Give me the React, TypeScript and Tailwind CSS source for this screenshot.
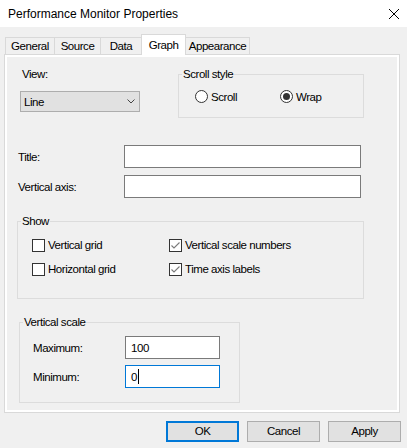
import React from 'react'

function GroupBox({ title, className, children }: { title: string; className: string; children: React.ReactNode }) {
  return (
    <fieldset className={`border border-[#dcdcdc] ${className}`}>
      <legend className="ml-[3px] px-[1px] leading-[16px]">{title}</legend>
      {children}
    </fieldset>
  )
}

function Radio({ checked, label, className = '' }: { checked?: boolean; label: string; className?: string }) {
  return (
    <div className={`flex items-center h-[13px] ${className}`}>
      <span className="w-[13px] h-[13px] rounded-full border border-[#333333] bg-white flex items-center justify-center">
        {checked && <span className="w-[7px] h-[7px] rounded-full bg-[#333333]" />}
      </span>
      <span className="ml-[3px] leading-[16px]">{label}</span>
    </div>
  )
}

function Check({ checked, label, className = '' }: { checked?: boolean; label: string; className?: string }) {
  return (
    <div className={`flex items-center h-[16px] ${className}`}>
      <span className="w-[13px] h-[13px] border border-[#333333] bg-white flex items-center justify-center">
        {checked && (
          <svg width="11" height="11" viewBox="0 0 11 11">
            <path d="M1.5 5.5 L4 8 L9.5 2.5" fill="none" stroke="#7a7a7a" strokeWidth="1.1" />
          </svg>
        )}
      </span>
      <span className="ml-[3px]">{label}</span>
    </div>
  )
}

function TextBox({ value, width, focused, caret }: { value?: string; width: string; focused?: boolean; caret?: boolean }) {
  return (
    <div className={`${width} h-[23px] bg-white border ${focused ? 'border-[#0078d7]' : 'border-[#7a7a7a]'} flex items-center pl-[5px]`}>
      <span>{value}</span>
      {caret && <span className="w-px h-[15px] bg-black ml-[1px]" />}
    </div>
  )
}

function Tab({ label, width, selected, edge }: { label: string; width: string; selected?: boolean; edge: string }) {
  if (selected) {
    return (
      <div className={`${width} h-[21px] -mb-px border-t border-l border-r border-[#d9d9d9] bg-white relative z-10 flex justify-center pt-[2px]`}>
        {label}
      </div>
    )
  }
  return (
    <div className={`${width} h-[17px] border-t ${edge} border-[#d9d9d9] bg-[#f0f0f0] flex justify-center items-center`}>
      {label}
    </div>
  )
}

function Button({ label, primary }: { label: string; primary?: boolean }) {
  return (
    <div className={`w-[73px] h-[21px] bg-[#e1e1e1] flex items-center justify-center ${primary ? 'border-2 border-[#0078d7]' : 'border border-[#adadad]'}`}>
      {label}
    </div>
  )
}

export default function App() {
  return (
    <div className="w-[407px] h-[448px] bg-[#f0f0f0] flex flex-col text-black text-[11.5px] tracking-[-0.45px] font-['Liberation_Sans',Arial,sans-serif] overflow-hidden">
      {/* title bar */}
      <div className="h-[27px] bg-white flex items-center justify-between pl-[8px] pr-[8px]">
        <span className="text-[12px] tracking-normal">Performance Monitor Properties</span>
        <svg width="10" height="10" viewBox="0 0 10 10">
          <path d="M0 0 L10 10 M10 0 L0 10" stroke="#000" strokeWidth="1" />
        </svg>
      </div>

      {/* tabs */}
      <div className="h-[27px] flex items-end pl-[5px] leading-[16px]">
        <Tab label="General" width="w-[49px]" edge="border-l" />
        <Tab label="Source" width="w-[46px]" edge="border-l" />
        <Tab label="Data" width="w-[41px]" edge="border-l" />
        <Tab label="Graph" width="w-[45px]" selected edge="" />
        <Tab label="Appearance" width="w-[64px]" edge="border-r" />
      </div>

      {/* page */}
      <div className="ml-[4px] w-[396px] h-[359px] border border-[#d9d9d9] bg-white p-[2px]">
        <div className="w-full h-full bg-[#f0f0f0] flex flex-col leading-[16px]">
          <div className="flex">
            <div className="ml-[13px] flex flex-col">
              <span className="ml-[2px] mt-[9px]">View:</span>
              <div className="mt-[9px] w-[120px] h-[21px] bg-[#e1e1e1] border border-[#adadad] flex items-center justify-between pl-[3px] pr-[4px]">
                <span>Line</span>
                <svg width="8" height="5" viewBox="0 0 8 5">
                  <path d="M0.5 0.5 L4 4 L7.5 0.5" fill="none" stroke="#444" strokeWidth="1" />
                </svg>
              </div>
            </div>
            <GroupBox title="Scroll style" className="ml-[38px] mt-[9px] w-[186px] h-[52px]">
              <div className="flex pl-[16px] pt-[8px]">
                <Radio label="Scroll" className="w-[85px]" />
                <Radio label="Wrap" checked />
              </div>
            </GroupBox>
          </div>

          <div className="flex items-center mt-[27px] ml-[11px]">
            <span className="w-[106px]">Title:</span>
            <TextBox width="w-[237px]" />
          </div>
          <div className="flex items-center mt-[7px] ml-[11px]">
            <span className="w-[106px]">Vertical axis:</span>
            <TextBox width="w-[237px]" />
          </div>

          <GroupBox title="Show" className="ml-[10px] mt-[15px] w-[347px] h-[86px]">
            <div className="grid grid-cols-[137px_1fr] gap-y-[8px] pl-[14px] pt-[8px]">
              <Check label="Vertical grid" />
              <Check label="Vertical scale numbers" checked />
              <Check label="Horizontal grid" />
              <Check label="Time axis labels" checked />
            </div>
          </GroupBox>

          <GroupBox title="Vertical scale" className="ml-[12px] mt-[15px] w-[221px] h-[89px]">
            <div className="flex flex-col gap-[6px] pl-[13px] pt-[6px]">
              <div className="flex items-center">
                <span className="w-[92px]">Maximum:</span>
                <TextBox width="w-[95px]" value="100" />
              </div>
              <div className="flex items-center">
                <span className="w-[92px]">Minimum:</span>
                <TextBox width="w-[95px]" value="0" focused caret />
              </div>
            </div>
          </GroupBox>
        </div>
      </div>

      {/* buttons */}
      <div className="mt-[8px] flex justify-end gap-[8px] pr-[6px]">
        <Button label="OK" primary />
        <Button label="Cancel" />
        <Button label="Apply" />
      </div>
    </div>
  )
}
